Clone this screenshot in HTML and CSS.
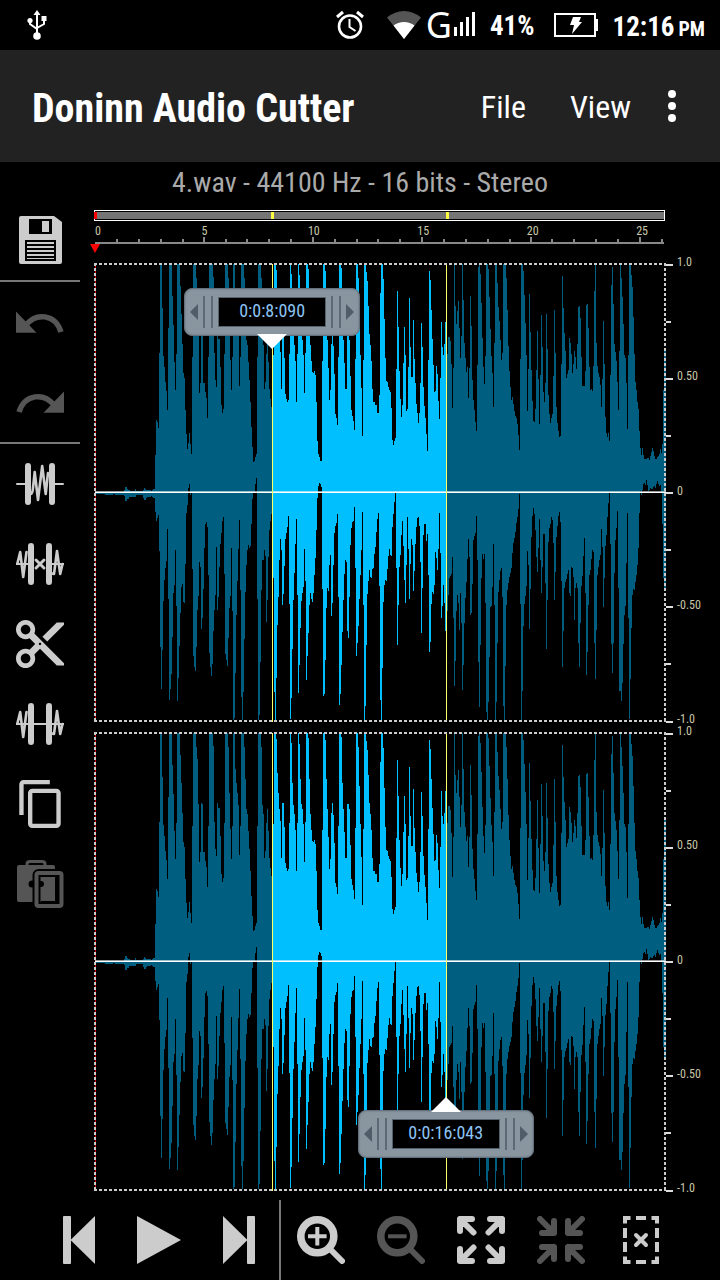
FILE: index.html
```html
<!DOCTYPE html>
<html lang="en">
<head>
<meta charset="utf-8">
<meta name="viewport" content="width=device-width, initial-scale=1">
<title>Doninn Audio Cutter</title>
<link rel="stylesheet" href="styles.css">
</head>
<body>
<div class="status">
  <svg class="usb" width="20" height="30" viewBox="0 0 20 30" fill="none" stroke="#fff" stroke-width="2"><path d="M10 4v20M3 9v5l7 5M17 8v6l-7 4"/><g fill="#fff" stroke="none"><path d="M10 0l3.500 5h-7zM14.500 6h5v5h-5z"/><circle cx="3" cy="10.500" r="2.600"/><circle cx="10" cy="26" r="3.800"/></g></svg>
  <svg class="alarm" width="28" height="30" viewBox="0 0 28 30" fill="none" stroke="#fff" stroke-width="2.600"><circle cx="14" cy="16.500" r="11"/><path d="M13.500 9v8l6 4" stroke-width="2"/><path d="M1 7l6-5M27 7l-6-5" stroke-width="3"/></svg>
  <svg class="wifi" width="34" height="28" viewBox="0 0 34 28"><path d="M17 28L0 6.500Q8 0 17 0t17 6.500z" fill="#555"/><path d="M17 28L6.500 14.500Q11 11 17 11t10.500 3.500z" fill="#fff"/></svg>
  <span class="net">G</span>
  <svg class="signal" width="22" height="24" viewBox="0 0 22 24" fill="#fff"><path d="M0 15h3v9H0zM6 10h3v14H6zM12 5h3v19h-3zM18 0h3v24h-3z"/></svg>
  <span class="percent">41%</span>
  <svg class="battery" width="44" height="24" viewBox="0 0 44 24"><path d="M1 1h40v22H1z" fill="none" stroke="#fff" stroke-width="2"/><path d="M40 6h4v12h-4z" fill="#fff"/><path d="M19 4h8l-2 5h3l-10 12 2-9h-4z" fill="#fff"/></svg>
  <span class="clock">12:16</span>
  <span class="meridiem">PM</span>
</div>

<header class="appbar">
  <h1>Doninn Audio Cutter</h1>
  <button class="menu" type="button">File</button>
  <button class="menu" type="button">View</button>
  <button class="more" type="button" aria-label="More options"><svg width="8" height="32" viewBox="0 0 8 32" fill="#fff"><circle cx="4" cy="4" r="4"/><circle cx="4" cy="16" r="4"/><circle cx="4" cy="28" r="4"/></svg></button>
</header>

<p class="info">4.wav - 44100 Hz - 16 bits - Stereo</p>

<main class="editor">
  <nav class="tools" aria-label="Edit">
    <button class="tool" type="button" aria-label="Save"><svg viewBox="0 0 48 48"><path fill="currentColor" d="M5 0h33l8 6v40q0 2-2 2H5q-2 0-2-2V2q0-2 2-2z"/><path d="M13 3h23v15H13zM9 24h31v21H9z"/><path fill="currentColor" d="M26 5h7v11h-7zM11 26h27v2H11zM11 30h27v2H11zM11 34h27v2H11zM11 38h27v2H11zM11 42h27v1H11z"/></svg></button>
    <hr class="rule">
    <button class="tool" type="button" aria-label="Undo" disabled><svg viewBox="0 0 48 48"><path fill="currentColor" d="M0 13.500v21.300h20.500z"/><path fill="none" stroke="currentColor" stroke-width="5.500" d="M10 27C20 14.500 39 15.500 45 34"/></svg></button>
    <button class="tool" type="button" aria-label="Redo" disabled><svg viewBox="0 0 48 48"><path fill="currentColor" d="M48 13.500v21.300H27.500z"/><path fill="none" stroke="currentColor" stroke-width="5.500" d="M38 27C28 14.500 9 15.500 3 34"/></svg></button>
    <hr class="rule">
    <button class="tool" type="button" aria-label="Trim to selection"><svg viewBox="0 0 48 48" fill="none" stroke="currentColor" stroke-linecap="round"><path stroke-width="6" d="M12 6v36M36 6v36"/><path stroke-width="2" d="M1 24h9M38 24h9"/><path stroke-width="2.600" stroke-linejoin="round" d="M15 34Q16.500 34 17 28L18.700 12 22 40 26.200 6 29.700 34 32 13"/></svg></button>
    <button class="tool" type="button" aria-label="Remove selection"><svg viewBox="0 0 48 48" fill="none" stroke="currentColor" stroke-linecap="round"><path stroke-width="6" d="M15 6v36M33 6v36"/><path stroke-width="2" d="M0 24h14M34 24h14"/><path stroke-width="2.600" stroke-linejoin="round" d="M1.500 23L4.200 12 7.200 37 10.500 12M36 33.500L38 34 41 11 44.200 34 46.500 24"/><path stroke-width="3" d="M20 20l8 8M28 20l-8 8"/></svg></button>
    <button class="tool" type="button" aria-label="Cut"><svg viewBox="2 2 20 20" fill="currentColor"><path d="M9.640 7.640c.23-.5.36-1.050.36-1.640 0-2.210-1.790-4-4-4S2 3.790 2 6s1.790 4 4 4c.59 0 1.140-.13 1.640-.36L10 12l-2.360 2.360C7.140 14.130 6.590 14 6 14c-2.210 0-4 1.790-4 4s1.790 4 4 4 4-1.790 4-4c0-.59-.13-1.140-.36-1.640L12 14l7 7h3v-1L9.640 7.640zM6 8c-1.100 0-2-.89-2-2s.9-2 2-2 2 .89 2 2-.9 2-2 2zm0 12c-1.100 0-2-.89-2-2s.9-2 2-2 2 .89 2 2-.9 2-2 2zm6-7.500c-.28 0-.5-.22-.5-.5s.22-.5.5-.5.5.22.5.5-.22.5-.5.5zM19 3l-6 6 2 2 7-7V3z"/></svg></button>
    <button class="tool" type="button" aria-label="Silence selection"><svg viewBox="0 0 48 48" fill="none" stroke="currentColor" stroke-linecap="round"><path stroke-width="6" d="M15 6v36M33 6v36"/><path stroke-width="2" d="M0 24h48"/><path stroke-width="2.600" stroke-linejoin="round" d="M1.500 23L4.200 12 7.200 37 10.500 12M36 33.500L38 34 41 11 44.200 34 46.500 24"/></svg></button>
    <button class="tool" type="button" aria-label="Copy"><svg viewBox="0.500 1 22 22" fill="currentColor"><path d="M16 1H4c-1.100 0-2 .9-2 2v14h2V3h12V1zm3 4H8c-1.100 0-2 .9-2 2v14c0 1.100.9 2 2 2h11c1.100 0 2-.9 2-2V7c0-1.100-.9-2-2-2zm0 16H8V7h11v14z"/></svg></button>
    <button class="tool" type="button" aria-label="Paste" disabled><svg viewBox="0 0 48 48"><path fill="currentColor" d="M3 5h34q2 0 2 2v35H3q-2 0-2-2V7q0-2 2-2z"/><path fill="none" stroke="currentColor" stroke-width="3" d="M11 6V4q0-2.500 3-2.500h12q3 0 3 2.500v2"/><circle cx="16" cy="24" r="3.500"/><rect x="20.500" y="13" width="25" height="33" rx="2" fill="none" stroke="#000" stroke-width="8"/><circle cx="25" cy="24" r="3"/><path d="M39 17h5v26H25v-2h14z"/><rect x="20.500" y="13" width="25" height="33" rx="2" fill="none" stroke="currentColor" stroke-width="4"/></svg></button>
  </nav>

  <section class="track" aria-label="Waveform">
    <div class="overview"><i class="cursor"></i><i class="mark start"></i><i class="mark end"></i></div>
    <div class="ruler">
      <div class="seconds"><span>0</span><span>5</span><span>10</span><span>15</span><span>20</span><span>25</span></div>
      <svg class="ticks" viewBox="0 0 571 7" preserveAspectRatio="none"><path id="ticks"/></svg>
      <svg class="playhead" width="10" height="9" viewBox="0 0 10 9"><path d="M0 0h10L5 9z" fill="#f00"/></svg>
    </div>
    <div class="channels">
      <div class="channel">
        <svg class="wave" viewBox="0 0 571 458" preserveAspectRatio="none">
          <defs><path id="wave"/><clipPath id="sel"><rect x="177" width="174" height="458"/></clipPath></defs>
          <use href="#wave" fill="#005f80"/><use href="#wave" fill="#00bfff" clip-path="url(#sel)"/>
          <path d="M.5 0v458" stroke="#d00"/><path d="M0 228h571v1H0z" fill="#fff"/><path d="M0 227h571v1H0z" fill="#fff" opacity=".6"/><path d="M177.500 0v458M351.500 0v458" stroke="#ffff66"/>
        </svg>
        <div class="scale"><span>1.0</span><span></span><span>0.50</span><span></span><span>0</span><span></span><span>-0.50</span><span></span><span>-1.0</span></div>
      </div>
      <div class="channel">
        <svg class="wave" viewBox="0 0 571 458" preserveAspectRatio="none">
          <use href="#wave" fill="#005f80"/><use href="#wave" fill="#00bfff" clip-path="url(#sel)"/>
          <path d="M.5 0v458" stroke="#d00"/><path d="M0 228h571v1H0z" fill="#fff"/><path d="M0 227h571v1H0z" fill="#fff" opacity=".6"/><path d="M177.500 0v458M351.500 0v458" stroke="#ffff66"/>
        </svg>
        <div class="scale"><span>1.0</span><span></span><span>0.50</span><span></span><span>0</span><span></span><span>-0.50</span><span></span><span>-1.0</span></div>
      </div>
      <div class="handles">
        <button class="handle start" type="button" aria-label="Selection start"><i class="arrow left"></i><i class="grip"></i><b>0:0:8:090</b><i class="grip"></i><i class="arrow right"></i></button>
        <button class="handle end" type="button" aria-label="Selection end"><i class="arrow left"></i><i class="grip"></i><b>0:0:16:043</b><i class="grip"></i><i class="arrow right"></i></button>
      </div>
    </div>
  </section>
</main>

<footer class="transport">
  <button class="tool" type="button" aria-label="Go to start"><svg viewBox="0 0 48 48" fill="currentColor"><rect x="8" width="8" height="48" rx="1"/><path d="M40 0v48L15.500 24z"/></svg></button>
  <button class="tool" type="button" aria-label="Play"><svg viewBox="0 0 48 48" fill="currentColor"><path d="M2 0v48l44-24z"/></svg></button>
  <button class="tool" type="button" aria-label="Go to end"><svg viewBox="0 0 48 48" fill="currentColor"><rect x="32" width="8" height="48" rx="1"/><path d="M8 0v48l24.500-24z"/></svg></button>
  <i class="divider"></i>
  <button class="tool" type="button" aria-label="Zoom in"><svg viewBox="0 0 48 48" fill="none" stroke="currentColor"><circle cx="20.300" cy="20.300" r="16.500" stroke-width="7.600"/><path stroke-width="4" d="M11 20.300h18.600M20.300 11v18.600"/><path stroke-width="6" stroke-linecap="round" d="M33 33l12 12"/></svg></button>
  <button class="tool" type="button" aria-label="Zoom out" disabled><svg viewBox="0 0 48 48" fill="none" stroke="currentColor"><circle cx="20.300" cy="20.300" r="16.500" stroke-width="7.600"/><path stroke-width="4" d="M11 20.300h18.600"/><path stroke-width="6" stroke-linecap="round" d="M33 33l12 12"/></svg></button>
  <button class="tool" type="button" aria-label="Zoom to selection"><svg viewBox="0 0 48 48" fill="none" stroke="currentColor" stroke-width="6" stroke-linecap="round" stroke-linejoin="round"><path d="M3 15V3h12M3 3l13.500 13.500M33 3h12v12M45 3L31.500 16.500M3 33v12h12M3 45l13.500-13.500M33 45h12V33M45 45L31.500 31.500"/></svg></button>
  <button class="tool" type="button" aria-label="Zoom all" disabled><svg viewBox="0 0 48 48" fill="none" stroke="currentColor" stroke-width="6" stroke-linecap="round" stroke-linejoin="round"><path d="M17 5v12H5M3 3l14 14M31 5v12h12M45 3L31 17M17 43V31H5M3 45l14-14M31 43V31h12M45 45L31 31"/></svg></button>
  <button class="tool" type="button" aria-label="Clear selection"><svg viewBox="0 0 48 48" fill="none" stroke="currentColor" stroke-width="4"><path d="M8 7.500V2h5.500M19 2h10M34.500 2H40v5.500M8 12v10M40 12v10M8 26v10M40 26v10M8 40.500V46h5.500M19 46h10M34.500 46H40v-5.500"/><path stroke-linecap="round" d="M19 19l10 10M29 19l-10 10"/></svg></button>
</footer>
<script src="wave.js"></script>
</body>
</html>
```
FILE: styles.css
```css
* { box-sizing: border-box; }

body {
  margin: 0;
  min-height: 100vh;
  display: flex;
  flex-direction: column;
  background: #000;
  color: #fff;
  font-family: "Roboto Condensed", "Liberation Sans Narrow", Roboto, sans-serif;
}

button {
  margin: 0;
  padding: 0;
  border: 0;
  background: none;
  color: inherit;
  font: inherit;
}

svg { display: block; flex: none; }

.status {
  height: 50px;
  display: flex;
  align-items: center;
  padding: 0 15px 0 27px;
  font-size: 27px;
  font-weight: 700;
  line-height: 50px;
}
.usb { margin-right: auto; }
.wifi { margin-left: 23px; }
.net { margin: 0 2px 0 5px; font: 400 36px/46px "Noto Sans", sans-serif; }
.signal { margin-top: -2px; }
.percent { margin: 0 20px 0 14px; padding-top: 2px; }
.clock { margin-left: 14px; padding-top: 3px; }
.meridiem { margin-left: 4px; padding-top: 8px; font-size: 20px; }

.appbar {
  height: 112px;
  display: flex;
  align-items: center;
  padding: 4px 44px 0 32px;
  background: #222;
}
.appbar h1 {
  flex: 1;
  margin: 0;
  font-size: 40px;
  font-weight: 700;
  white-space: nowrap;
}
.menu { margin: 0 44px 2px 0; font-size: 32px; }
.more { margin: 0 0 4px -7px; }

.info {
  margin: 0;
  height: 38px;
  line-height: 42px;
  font-size: 28px;
  text-align: center;
  color: #aaa;
  white-space: nowrap;
}

.editor { flex: 1; display: flex; }

.tools { width: 80px; flex: none; }
.tool {
  width: 80px;
  height: 80px;
  display: grid;
  place-items: center;
  color: #ccc;
}
.tool:disabled { color: #555; }
.tool svg { width: 48px; height: 48px; }
.rule { margin: 0; border: 0; height: 2px; background: #777; }

.track {
  flex: 1;
  min-width: 0;
  display: flex;
  flex-direction: column;
  padding: 10px 0 9px 14px;
}

.overview {
  position: relative;
  height: 11px;
  margin-right: 55px;
  padding: 1px 0;
  border: 1px solid #fff;
  background: #757575 content-box;
}
.overview i { position: absolute; top: 1px; bottom: 1px; width: 3px; background: #ffff44; }
.overview .cursor { left: -1px; background: #f00; }
.overview .start { left: 31%; }
.overview .end { left: 61.700%; }

.ruler { position: relative; height: 42px; margin: 0 56px 0 1px; }
.seconds {
  display: grid;
  grid-template-columns: repeat(26, 1fr);
  height: 16px;
  line-height: 20px;
  font-size: 12px;
  color: #c8c8a8;
}
.seconds span { width: 0; display: flex; justify-content: center; grid-row: 1; }
.seconds span:nth-child(1) { grid-column: 1; width: 6px; }
.seconds span:nth-child(2) { grid-column: 6; }
.seconds span:nth-child(3) { grid-column: 11; }
.seconds span:nth-child(4) { grid-column: 16; }
.seconds span:nth-child(5) { grid-column: 21; }
.seconds span:nth-child(6) { grid-column: 26; }
.ticks { width: 100%; height: 7px; fill: #888; shape-rendering: crispEdges; }
.playhead { margin-left: -5px; }

.channels {
  flex: 1;
  position: relative;
  display: flex;
  flex-direction: column;
  gap: 10px;
}
.channel { flex: 1; display: flex; position: relative; }
.wave {
  flex: 1;
  width: 0;
  min-width: 0;
  height: auto;
  margin: 1px 0 0 1px;
  shape-rendering: crispEdges;
}
.channel::after {
  content: "";
  position: absolute;
  inset: 0 54px 0 0;
  background:
    repeating-linear-gradient(90deg, #ccc 0 3px, transparent 3px 5px) top / 100% 2px no-repeat,
    repeating-linear-gradient(90deg, #ccc 0 3px, transparent 3px 5px) bottom / 100% 2px no-repeat,
    repeating-linear-gradient(#ccc 0 3px, transparent 3px 5px) left / 2px 100% no-repeat,
    repeating-linear-gradient(#ccc 0 3px, transparent 3px 5px) right / 2px 100% no-repeat;
}
.scale {
  width: 54px;
  display: flex;
  flex-direction: column;
  justify-content: space-between;
  margin-top: -1px;
  padding-bottom: 3px;
  font-size: 12px;
  color: #c8c8a8;
}
.scale span { height: 0; display: flex; align-items: center; padding-bottom: 3px; margin-bottom: -3px; }
.scale span::before { content: ""; flex: none; width: 7px; height: 2px; margin: 5px 4px 0 0; background: #ddd; }
.scale span:nth-child(even)::before { width: 5px; }

.handles { position: absolute; inset: 0 55px 0 0; }
.handle {
  position: absolute;
  width: 176px;
  height: 48px;
  margin-left: -88px;
  display: flex;
  align-items: center;
  justify-content: space-between;
  padding: 0 5px;
  border: 1px solid #65717c;
  border-radius: 8px;
  background: #8996a0;
  box-shadow: inset 0 0 2px #5c6872;
}
.handle.start { left: 31.200%; top: 25px; }
.handle.end { left: 61.600%; bottom: 33px; }
.handle::after {
  content: "";
  position: absolute;
  left: 72px;
  border: 15px solid transparent;
}
.handle.start::after { top: 45px; border-top-color: #fff; border-bottom: 0; }
.handle.end::after { bottom: 45px; border-bottom-color: #fff; border-top: 0; }
.handle b {
  width: 108px;
  height: 30px;
  line-height: 25px;
  border: 1px solid #55616c;
  background: #000;
  color: #8cc4f4;
  font-size: 18px;
  font-weight: 400;
  text-align: center;
}
.grip { width: 10px; height: 32px; border: solid #5d6a75; border-width: 0 2px; }
.arrow { border: 8px solid transparent; }
.arrow.left { border-right-color: #505d68; border-left: 0; }
.arrow.right { border-left-color: #505d68; border-right: 0; }

.transport { height: 80px; display: flex; justify-content: center; }
.divider { width: 2px; background: #777; }
```
FILE: wave.js
```javascript
// Envelopes as one value per column; "@n" moves to column n, holding the last value up to it.
const TOP = `@0 229 @29 226 223 223 225 226 226 227 @40 225 227 @48 226 224 225 226 @56 227 226 225
@60 191 156 158 164 89 0 0 44 92 103 118 127 146 64 0 0 0 32 61 98 126 90 0 0 0 22 50 80 109 114
@90 146 170 185 179 169 180 190 93 0 0 0 14 26 71 129 119 70 71 @108 119 119 128 134 154 93 0 @118 13 89 116 123 70 75 75 103 141 149
@128 145 90 0 0 0 14 60 96 126 93 0 0 36 50 60 72 122 93 0 0 0 14
@150 46 76 81 98 116 138 163 183 198 197 193 190 93 0 0 0 14 72 81 125 118 90 76 98 125 135 143 150
@178 91 0 0 6 40 60 76 88 125 70 70 94 130 135 138 136 90 0 10 50 72 81 97 138 90 0 11 46 71 76 91 129 89 0 0
@213 5 46 81 97 108 109 107 111 138 177 190 193 197 197 97 0 0 7 46 76 104 136 126 80 70 82 110 150 154 161 93 0 0
@246 4 50 76 99 125 125 71 71 76 112 146 152 157 166 95 0 0 14 53 91 124 172 96 0 0 8 17 42 70 81 97 125 138 138 141 141 149 149
@284 131 29 0 0 15 55 94 117 118 123 126 128 144 176 181 177 174 105 27 63 107 135 153 141 99 63 91 147 145 103 34 83 113 113
@318 56 95 119 140 149 159 149 119 59 83 123 142 154 170 187 96 7 16 46 75 101 128 127 102 110 137 155 114 58 83 91 80 58
@351 58 90 73 73 77 100 144 104 0 42 60 47 37 64 94 72 0 36 79 94 108 103 134 104 32 62 116 136 146 158 167 101 3 0
@385 10 39 74 103 120 92 0 0 5 33 65 92 109 143 79 0 0 19 43 57 76 96 89 0 0 0 14 46 82 107 123 136 133 140 147 152 154 160 171 186
@425 95 0 0 7 31 59 91 147 105 30 68 106 137 157 158 145 106 67 115 160 111 51 83 128 138 119 50 85 131 150 159 154 150 112 46
@460 89 143 159 167 173 172 100 12 44 69 87 114 110 106 74 79 90 109 100 87 93 105 80 43 42 54 93 122 122 122 107
@491 41 40 64 103 126 125 127 102 27 0 79 102 109 113 121 143 115 57 100 153 169 173 169 177 111 21 3 40 80 88 97 118 146 87 0
@526 14 33 60 91 94 119 165 91 0 0 11 23 53 90 118 126 138 145 167 184 191 184 191 195 195 195 194 194 196 192 188 184 187 192 195
@562 193 192 190 185 189 180 126 87 87`;
const BOTTOM = `@0 230 @10 231 @18 230 @20 231 @29 232 237 237 235 235 233 @39 233 233 231 @48 234 236 236 234 233 @56 232 233 234
@60 248 257 254 251 287 383 425 386 337 316 304 297 265 335 436 425 410 373 329 321 286 342 437 414 382 349 323 320 338 339
@90 300 249 241 224 220 231 228 305 392 403 407 383 346 332 298 303 365 354 325 284 260 258 263 311 389 403 412 400 367 346 331 283 346 333 303 280 269 257
@128 253 310 390 396 402 374 344 332 284 347 456 454 409 351 317 285 256 326 433 456 428 375
@150 328 301 286 281 284 282 260 235 228 228 220 214 335 456 451 398 326 296 296 286 292 358 336 293 266 257 250 250
@178 314 428 456 414 361 333 296 275 286 341 330 302 275 269 263 252 340 455 434 385 336 309 280 255 331 429 401 364 337 329 323 285 317 416 392
@213 369 341 329 335 338 329 311 294 266 234 222 219 220 223 325 432 430 396 344 324 327 301 291 352 339 301 269 262 259 250 333 441 430
@246 401 368 336 310 296 298 367 374 333 281 264 258 257 243 304 392 379 362 335 311 286 248 341 456 442 381 330 317 306 313 314 305 304 290 283 268 255 249
@284 322 436 456 404 338 321 316 317 305 292 285 291 292 263 250 238 229 304 381 341 303 291 271 257 282 316 339 301 253 285 335 300 275 281
@318 327 307 280 263 254 253 262 298 369 324 271 260 260 277 270 311 388 378 340 328 330 321 288 294 306 285 249 289 354 342 321 339 367
@351 367 347 331 314 312 310 293 354 422 397 347 331 339 366 329 359 426 401 359 334 318 295 275 293 351 349 320 276 272 269 252 296 398 443
@385 381 314 290 295 290 339 448 456 438 393 343 342 323 280 341 456 438 379 328 316 307 304 333 442 456 402 341 326 319 313 309 304 289 279 274 268 259 253 245 230
@425 340 456 427 362 340 332 322 287 301 365 325 273 252 244 250 266 293 308 284 255 296 329 303 270 270 319 385 336 278 264 260 253 256 279 336
@460 308 273 262 252 248 258 317 403 367 324 318 315 310 306 329 332 303 304 313 356 324 319 324 379 403 359 322 312 292 274 329
@491 411 388 341 311 306 295 286 288 379 415 366 311 303 296 291 265 283 343 314 282 271 253 239 229 280 380 409 379 309 276 264 247 324 427 427
@526 437 419 380 351 342 299 249 354 455 415 364 331 325 326 318 311 301 284 249 227 231 226 220 219 221 216 221 227 226 224 225 225 223 222 224 220 217 220 222 221 228 260 314 324 324`;

function expand(text) {
  const out = [];
  for (const token of text.trim().split(/\s+/)) {
    if (token[0] === "@") {
      const x = +token.slice(1);
      while (out.length < x) out.push(out[out.length - 1]);
      out.length = x;
    } else {
      out.push(+token);
    }
  }
  while (out.length < 571) out.push(out[out.length - 1]);
  return out.slice(0, 571);
}

const upper = expand(TOP);
const lower = expand(BOTTOM);
document.getElementById("wave").setAttribute("d",
  upper.map((y, x) => `M${x} ${y}h1V${Math.max(lower[x], y)}h-1z`).join(""));

let ticks = "M0 5H571V7H0z";
for (let s = 1; s <= 26; s++) {
  const x = Math.round(s * 21.88);
  ticks += `M${x - 1} ${s % 5 ? 2 : 0}h2V5h-2z`;
}
document.getElementById("ticks").setAttribute("d", ticks);
```
